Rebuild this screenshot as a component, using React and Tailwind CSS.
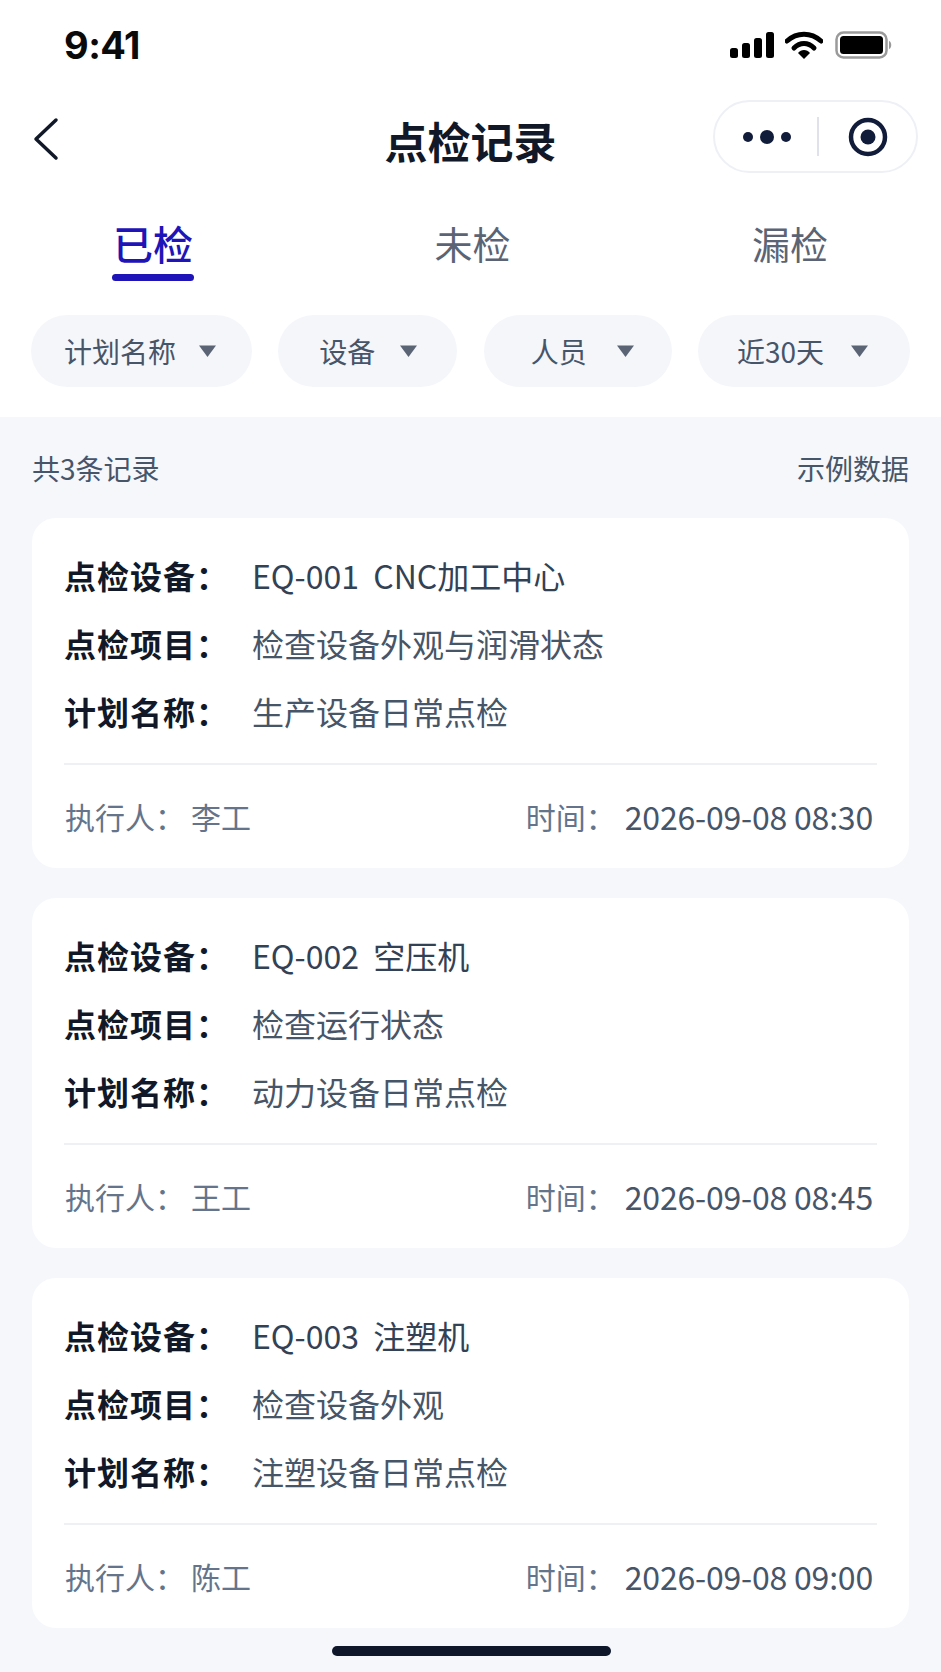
import React from "react";

const cards = [
  { device: "EQ-001 CNC加工中心", item: "检查设备外观与润滑状态", plan: "生产设备日常点检", who: "李工", time: "2026-09-08 08:30" },
  { device: "EQ-002 空压机", item: "检查运行状态", plan: "动力设备日常点检", who: "王工", time: "2026-09-08 08:45" },
  { device: "EQ-003 注塑机", item: "检查设备外观", plan: "注塑设备日常点检", who: "陈工", time: "2026-09-08 09:00" },
];

const pills = [
  { t: "计划名称", w: "w-[221px]", g: "gap-[22px]", pad: "pl-[33px]" },
  { t: "设备", w: "w-[179px]", g: "gap-[24px]", pad: "pl-[41px]" },
  { t: "人员", w: "w-[188px]", g: "gap-[29px]", pad: "pl-[47px]" },
  { t: "近30天", w: "w-[212px]", g: "gap-[26px]", pad: "pl-[39px]" },
];

function Row({ label, value, dark }) {
  return (
    <div className="flex items-center h-[68px]">
      <span className="w-[188px] shrink-0 text-[32px] font-bold leading-none text-[#111827] tracking-[1px]">{label}</span>
      <span className="text-[32px] leading-none whitespace-pre text-[#475569]" style={dark ? { color: "#334155" } : undefined}>{value}</span>
    </div>
  );
}

function Card({ c }) {
  return (
    <div className="bg-white rounded-[24px] h-[350px] px-[32px] pt-[23px]">
      <Row label="点检设备：" value={c.device.replace(" ", "  ")} dark />
      <Row label="点检项目：" value={c.item} />
      <Row label="计划名称：" value={c.plan} />
      <div className="h-[2px] bg-[#eef0f4] mt-[18px]" />
      <div className="flex justify-between items-center h-[102px] text-[30px] text-[#64748b] pr-[4px] pl-[1px]">
        <div className="flex items-center">
          <span className="w-[126px]">执行人：</span>
          <span>{c.who}</span>
        </div>
        <div className="flex items-center">
          <span className="w-[99px]">时间：</span>
          <span className="text-[#475569] text-[32px] tracking-[-0.2px]">{c.time}</span>
        </div>
      </div>
    </div>
  );
}

export default function App() {
  return (
    <div className="w-[941px] h-[1672px] bg-[#f5f7fb] overflow-hidden relative font-['Noto_Sans_CJK_SC','Noto_Sans',sans-serif]">
      <div className="bg-white h-[417px]">
        <div className="flex justify-between items-center h-[90px] pl-[64px] pr-[48px]">
          <span className="text-[38px] font-bold font-['Inter',sans-serif] text-[#0a0a0a] tracking-[-0.5px]">9:41</span>
          <div className="flex items-center">
            <svg width="44" height="26" viewBox="0 0 44 26" fill="#000" className="mr-[11px]">
              <rect x="0" y="16" width="8" height="10" rx="2.5" />
              <rect x="12" y="11" width="8" height="15" rx="2.5" />
              <rect x="24" y="6" width="8" height="20" rx="2.5" />
              <rect x="36" y="0" width="8" height="26" rx="2.5" />
            </svg>
            <svg width="38" height="28" viewBox="0 0 38 28" className="mr-[12px]">
              <path d="M2 10 C12 1 26 1 36 10" fill="none" stroke="#000" strokeWidth="5" strokeLinecap="round" />
              <path d="M9 17 C15 11 23 11 29 17" fill="none" stroke="#000" strokeWidth="5" strokeLinecap="round" />
              <path d="M13 22 C16 18 22 18 25 22 L19 28 Z" fill="#000" />
            </svg>
            <svg width="58" height="28" viewBox="0 0 58 28">
              <rect x="1.5" y="1.5" width="50" height="25" rx="7" fill="none" stroke="#9a9a9a" strokeWidth="2.5" />
              <rect x="5" y="5" width="43" height="18" rx="3.5" fill="#000" />
              <path d="M54 10 C57 11 57 17 54 18 Z" fill="#9a9a9a" />
            </svg>
          </div>
        </div>
        <div className="relative flex justify-center items-center h-[100px]">
          <svg width="28" height="44" viewBox="0 0 28 44" fill="none" className="absolute left-[32px] top-[27px]">
            <path d="M24 3 L4 22 L24 41" stroke="#111827" strokeWidth="3.5" strokeLinecap="round" strokeLinejoin="round" />
          </svg>
          <span className="text-[43px] font-bold text-[#111827] leading-none">点检记录</span>
          <div className="absolute left-[713px] top-[10px] w-[205px] h-[73px] rounded-full border-2 border-[#eef0f6] flex items-center">
            <svg width="54" height="16" viewBox="0 0 54 16" fill="#111b3a" className="ml-[27px]">
              <circle cx="6" cy="8" r="5" />
              <circle cx="25" cy="8" r="7" />
              <circle cx="44" cy="8" r="5" />
            </svg>
            <div className="w-[2px] h-[39px] bg-[#dfe2ea] ml-[21px]" />
            <svg width="40" height="40" viewBox="0 0 40 40" fill="none" className="ml-[29px]">
              <circle cx="20" cy="20" r="17" stroke="#111b3a" strokeWidth="4.5" />
              <circle cx="20" cy="20" r="7.5" fill="#111b3a" />
            </svg>
          </div>
        </div>
        <div className="flex justify-between px-[113px] pt-[26px] h-[125px]">
          <div className="flex flex-col items-center w-[80px]">
            <span className="text-[40px] font-medium leading-[54px] text-[#1e14b8] whitespace-nowrap">已检</span>
            <div className="w-[82px] h-[7px] rounded-full bg-[#1e14b8] mt-[4px]" />
          </div>
          <span className="text-[38px] leading-[54px] text-[#5b6475] whitespace-nowrap">未检</span>
          <span className="text-[38px] leading-[54px] text-[#5b6475] whitespace-nowrap">漏检</span>
        </div>
        <div className="flex justify-between pl-[31px] pr-[31px]">
          {pills.map((p) => (
            <div key={p.t} className={`${p.w} ${p.g} ${p.pad} h-[72px] rounded-full bg-[#f5f6fa] flex items-center text-[28px] text-[#475569] whitespace-nowrap`}>
              <span>{p.t}</span>
              <svg width="19" height="14" viewBox="0 0 19 14" fill="#5b6475">
                <path d="M1 1.5 H18 L9.5 13 Z" />
              </svg>
            </div>
          ))}
        </div>
      </div>
      <div className="flex justify-between items-center h-[101px] px-[32px] text-[28px] text-[#475569]">
        <span>共3条记录</span>
        <span>示例数据</span>
      </div>
      <div className="flex flex-col gap-[30px] px-[32px]">
        {cards.map((c) => (
          <Card key={c.device} c={c} />
        ))}
      </div>
      <div className="absolute left-[332px] top-[1646px] w-[279px] h-[10px] rounded-full bg-[#0f172a]" />
    </div>
  );
}
